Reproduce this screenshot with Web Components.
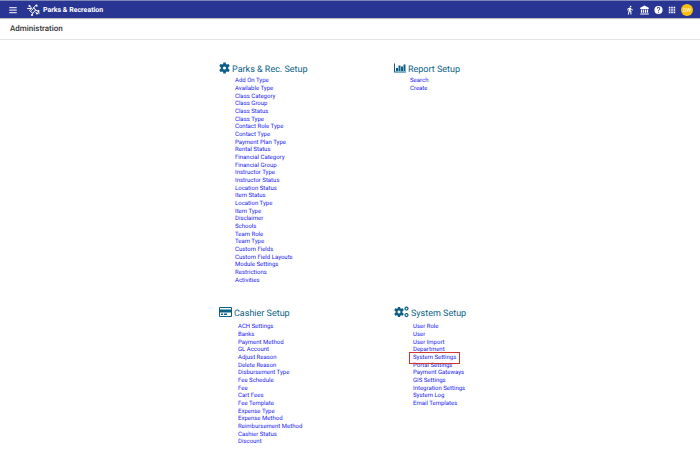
<!DOCTYPE html>
<html lang="en">
<head>
<meta charset="utf-8">
<meta name="viewport" content="width=device-width, initial-scale=1">
<title>Administration</title>
<style>
    body {
        margin: 0;
        background: #fff;
        font-family: Roboto, "Liberation Sans", sans-serif;
        text-rendering: geometricPrecision;
    }
</style>
</head>
<body>
<app-bar heading="Parks &amp; Recreation" initials="DW"></app-bar>
<page-title>Administration</page-title>
<setup-grid>
    <setup-panel heading="Parks &amp; Rec. Setup" icon="gear">
        <setup-link>Add On Type</setup-link>
        <setup-link>Available Type</setup-link>
        <setup-link>Class Category</setup-link>
        <setup-link>Class Group</setup-link>
        <setup-link>Class Status</setup-link>
        <setup-link>Class Type</setup-link>
        <setup-link>Contact Role Type</setup-link>
        <setup-link>Contact Type</setup-link>
        <setup-link>Payment Plan Type</setup-link>
        <setup-link>Rental Status</setup-link>
        <setup-link>Financial Category</setup-link>
        <setup-link>Financial Group</setup-link>
        <setup-link>Instructor Type</setup-link>
        <setup-link>Instructor Status</setup-link>
        <setup-link>Location Status</setup-link>
        <setup-link>Item Status</setup-link>
        <setup-link>Location Type</setup-link>
        <setup-link>Item Type</setup-link>
        <setup-link>Disclaimer</setup-link>
        <setup-link>Schools</setup-link>
        <setup-link>Team Role</setup-link>
        <setup-link>Team Type</setup-link>
        <setup-link>Custom Fields</setup-link>
        <setup-link>Custom Field Layouts</setup-link>
        <setup-link>Module Settings</setup-link>
        <setup-link>Restrictions</setup-link>
        <setup-link>Activities</setup-link>
    </setup-panel>
    <setup-panel heading="Report Setup" icon="chart">
        <setup-link>Search</setup-link>
        <setup-link>Create</setup-link>
    </setup-panel>
    <setup-panel heading="Cashier Setup" icon="card">
        <setup-link>ACH Settings</setup-link>
        <setup-link>Banks</setup-link>
        <setup-link>Payment Method</setup-link>
        <setup-link>GL Account</setup-link>
        <setup-link>Adjust Reason</setup-link>
        <setup-link>Delete Reason</setup-link>
        <setup-link>Disbursement Type</setup-link>
        <setup-link>Fee Schedule</setup-link>
        <setup-link>Fee</setup-link>
        <setup-link>Cart Fees</setup-link>
        <setup-link>Fee Template</setup-link>
        <setup-link>Expense Type</setup-link>
        <setup-link>Expense Method</setup-link>
        <setup-link>Reimbursement Method</setup-link>
        <setup-link>Cashier Status</setup-link>
        <setup-link>Discount</setup-link>
    </setup-panel>
    <setup-panel heading="System Setup" icon="gears">
        <setup-link>User Role</setup-link>
        <setup-link>User</setup-link>
        <setup-link>User Import</setup-link>
        <setup-link>Department</setup-link>
        <setup-link marked>System Settings</setup-link>
        <setup-link>Portal Settings</setup-link>
        <setup-link>Payment Gateways</setup-link>
        <setup-link>GIS Settings</setup-link>
        <setup-link>Integration Settings</setup-link>
        <setup-link>System Log</setup-link>
        <setup-link>Email Templates</setup-link>
    </setup-panel>
</setup-grid>

<script>
    // The gear body, also used in the "gears" icon.
    const GEAR = 'M19.4 13.500a7.500 7.500 0 0 0 0-3L22.500 8 20 3.800l-3.400 1.200a8 8 0 0 0-1.800-1L14.400 1H9.600L9.200 4a8 8 0 0 0-1.800 1L4 3.800 1.500 8l3.100 2.500a7.500 7.500 0 0 0 0 3L1.500 16 4 20.200 7.400 19a8 8 0 0 0 1.800 1l.4 3h4.800l.4-3a8 8 0 0 0 1.800-1l3.400 1.200 2.500-4.200zM12 8.800a3.200 3.200 0 1 1 0 6.400 3.200 3.200 0 0 1 0-6.400z';

    const ICONS = {
        gear: { box: '1 1 22 22', width: 11, body: `<path fill-rule="evenodd" d="${GEAR}"/>` },
        chart: {
            box: '0 0 24 20', width: 12,
            body: '<path d="M0 1h2v16h22v2H0zM4 10h4v6H4zM9 5h4v11H9zM14 7h4v9h-4zM19 3h4v13h-4z"/>'
        },
        card: {
            box: '0 0 26 22', width: 13,
            body: '<path fill-rule="evenodd" d="M2 1h22a2 2 0 0 1 2 2v16a2 2 0 0 1-2 2H2a2 2 0 0 1-2-2V3a2 2 0 0 1 2-2zM2 3v3h22V3zM2 12v7h22v-7z"/><path d="M4 14h4v3H4zM10 14h6v3h-6z"/>'
        },
        gears: {
            box: '0 0 30 24', width: 15,
            body: `<path fill-rule="evenodd" transform="translate(-1 1) scale(.92)" d="${GEAR}"/>
                <g fill="none" stroke="currentColor" stroke-width="2.500">
                <circle cx="25" cy="5" r="3"/><circle cx="25" cy="18" r="3"/></g>`
        },
        menu: { box: '0 0 24 24', width: 10, body: '<path d="M3 5h18v2.500H3zM3 11h18v2.500H3zM3 17h18v2.500H3z"/>' },
        logo: {
            box: '0 0 26 24', width: 13,
            body: `<g fill="none" stroke="currentColor" stroke-width="2" stroke-linecap="round" stroke-linejoin="round">
                <path d="M5 4l4 4-4 5 7 6-2 3M2 9h6M9 13l5-6 3-4 3 1M13 7l4 5-5 6M17 12l6 3 1 4M17 16l3 3"/></g>
                <circle cx="5" cy="4" r="2"/><circle cx="2" cy="9" r="1.500"/><circle cx="19" cy="3" r="2"/>
                <circle cx="23" cy="14" r="2"/><circle cx="10" cy="22" r="2"/><circle cx="20" cy="19" r="2"/>`
        },
        walk: {
            box: '0 0 24 24', width: 10,
            body: '<path d="M13.500 5.500a2 2 0 1 0 0-4 2 2 0 0 0 0 4zM9.800 8.900L6.500 23h2.600l2-8 1.900 2v6h2.400v-8l-2.100-2 .6-3A7.300 7.300 0 0 0 19 13v-2a4.900 4.900 0 0 1-4.200-2.400l-1-1.600a2 2 0 0 0-2.500-.8L6 8.300V13h2V9.600z"/>'
        },
        bank: {
            box: '2 2 20 20', width: 9,
            body: '<path d="M12 2l9.500 5v2.500h-19V7zM4 11h3v7H4zM8.800 11h2.400v7H8.800zM13 11h2.400v7H13zM17 11h3v7h-3zM2.500 19.500h19V22h-19z"/>'
        },
        help: {
            box: '1 1 22 22', width: 9,
            body: '<path fill-rule="evenodd" d="M12 2a10 10 0 1 0 0 20 10 10 0 0 0 0-20zm1 17h-2v-2h2zm2.100-7.800l-.9.900A3.400 3.400 0 0 0 13 15h-2v-.5c0-1.100.4-2.100 1.200-2.800l1.200-1.300A2 2 0 1 0 10 9H8a4 4 0 1 1 7.100 2.200z"/>'
        },
        apps: {
            box: '2 2 20 20', width: 8,
            body: '<path d="M4 4h4v4H4zM10 4h4v4h-4zM16 4h4v4h-4zM4 10h4v4H4zM10 10h4v4h-4zM16 10h4v4h-4zM4 16h4v4H4zM10 16h4v4h-4zM16 16h4v4h-4z"/>'
        }
    };

    /**
     * An inline icon, picked with the "name" attribute.
     */
    class AdminIcon extends HTMLElement {
        constructor() {
            super();
            this.attachShadow({ mode: 'open' });
        }

        connectedCallback() {
            const icon = ICONS[this.getAttribute('name')];

            this.shadowRoot.innerHTML = `
                <style>
                    :host { display: block; flex: none; width: ${icon.width}px; }
                    svg { display: block; width: 100%; height: 12px; fill: currentColor; }
                </style>
                <svg viewBox="${icon.box}" aria-hidden="true">${icon.body}</svg>
            `;
        }
    }

    /**
     * The blue bar with the menu, the product name and the tools.
     */
    class AppBar extends HTMLElement {
        constructor() {
            super();
            this.attachShadow({ mode: 'open' });
        }

        connectedCallback() {
            this.shadowRoot.innerHTML = `
                <style>
                    :host {
                        display: block;
                        background: #283593;
                        color: #fff;
                        border-top: 1px solid #7f86b8;
                        box-shadow: 0 1px 1px #bbb;
                    }
                    header {
                        display: flex;
                        align-items: center;
                        height: 17px;
                        padding: 0 7px 0 8px;
                    }
                    button {
                        padding: 0;
                        border: 0;
                        background: none;
                        color: inherit;
                        font: inherit;
                    }
                    .brand {
                        display: flex;
                        align-items: center;
                        gap: 3px;
                        margin-left: 9px;
                        font-size: 7px;
                        line-height: 10px;
                        font-weight: 700;
                    }
                    nav {
                        display: flex;
                        align-items: center;
                        gap: 5px;
                        margin-left: auto;
                    }
                    .avatar {
                        width: 12px;
                        height: 12px;
                        border-radius: 50%;
                        background: #fdc010;
                        font-size: 5px;
                        line-height: 12px;
                        text-align: center;
                    }
                    .menu { color: #d4d7e9; }
                </style>
                <header>
                    <button class="menu" aria-label="Menu"><admin-icon name="menu"></admin-icon></button>
                    <div class="brand"><admin-icon name="logo"></admin-icon><span class="name"></span></div>
                    <nav>
                        <button aria-label="Activities"><admin-icon name="walk"></admin-icon></button>
                        <button aria-label="Organization"><admin-icon name="bank"></admin-icon></button>
                        <button aria-label="Help"><admin-icon name="help"></admin-icon></button>
                        <button aria-label="Apps"><admin-icon name="apps"></admin-icon></button>
                        <button class="avatar"></button>
                    </nav>
                </header>
            `;
            this.shadowRoot.querySelector('.name').textContent = this.getAttribute('heading');
            this.shadowRoot.querySelector('.avatar').textContent = this.getAttribute('initials');
        }
    }

    /**
     * The strip with the page's name.
     */
    class PageTitle extends HTMLElement {
        constructor() {
            super();
            this.attachShadow({ mode: 'open' }).innerHTML = `
                <style>
                    :host {
                        display: block;
                        padding: 5px 10px;
                        border-bottom: 1px solid #e2e2e2;
                    }
                    h1 {
                        margin: 0;
                        color: #333;
                        font-size: 8px;
                        line-height: 11px;
                        font-weight: 500;
                    }
                </style>
                <h1><slot></slot></h1>
            `;
        }
    }

    /**
     * Two columns of panels in the middle half of the page.
     */
    class SetupGrid extends HTMLElement {
        constructor() {
            super();
            this.attachShadow({ mode: 'open' }).innerHTML = `
                <style>
                    :host {
                        display: grid;
                        grid-template-columns: 1fr 1fr;
                        row-gap: 22px;
                        width: 50%;
                        margin: 0 auto;
                        padding-top: 22px;
                    }
                </style>
                <slot></slot>
            `;
        }
    }

    /**
     * A titled list of links.
     */
    class SetupPanel extends HTMLElement {
        constructor() {
            super();
            this.attachShadow({ mode: 'open' });
        }

        connectedCallback() {
            this.shadowRoot.innerHTML = `
                <style>
                    :host { display: block; padding-left: 44px; }
                    h2 {
                        display: flex;
                        align-items: flex-start;
                        gap: 2px;
                        height: 15px;
                        margin: 0;
                        color: #0b5f86;
                        font-size: 9px;
                        line-height: 16px;
                        font-weight: 400;
                        white-space: nowrap;
                    }
                    .links { padding-left: 16px; }
                    :host([icon="card"]) .links, :host([icon="gears"]) .links { padding: 2px 0 0 19px; }
                    ::slotted(setup-link) { height: 8px; }
                    ::slotted(setup-link:nth-child(3n)) { height: 7px; }
                </style>
                <h2><admin-icon name="${this.getAttribute('icon')}"></admin-icon><span></span></h2>
                <div class="links" role="list"><slot></slot></div>
            `;
            this.shadowRoot.querySelector('span').textContent = this.getAttribute('heading');
        }
    }

    /**
     * One link of a panel, with a red frame when "marked" is set.
     */
    class SetupLink extends HTMLElement {
        constructor() {
            super();
            this.attachShadow({ mode: 'open' }).innerHTML = `
                <style>
                    :host { display: block; white-space: nowrap; line-height: 8px; font-size: 6px; }
                    a {
                        display: block;
                        width: fit-content;
                        color: #2020f4;
                        text-decoration: none;
                    }
                    :host([marked]) a { position: relative; }
                    :host([marked]) a::after {
                        content: "";
                        position: absolute;
                        inset: -2px -4px;
                        border: 1px solid #d0342c;
                    }
                </style>
                <a href="#"><slot></slot></a>
            `;
        }

        connectedCallback() {
            this.setAttribute('role', 'listitem');
        }
    }

    customElements.define('admin-icon', AdminIcon);
    customElements.define('app-bar', AppBar);
    customElements.define('page-title', PageTitle);
    customElements.define('setup-grid', SetupGrid);
    customElements.define('setup-panel', SetupPanel);
    customElements.define('setup-link', SetupLink);
</script>
</body>
</html>
